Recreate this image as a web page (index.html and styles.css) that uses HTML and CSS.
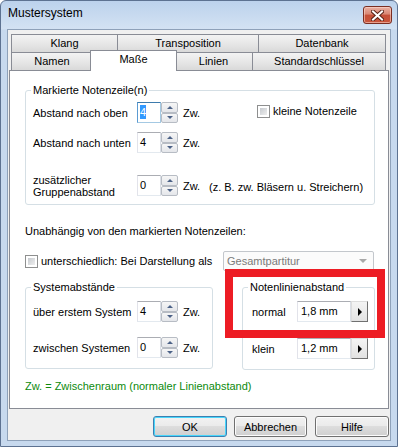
FILE: index.html
```html
<!DOCTYPE html>
<html lang="de">
<head>
  <meta charset="UTF-8">
  <title>Mustersystem</title>
  <link rel="stylesheet" href="styles.css">
</head>
<body>

  <div class="window">
    <div class="titlebar">
      <span class="title">Mustersystem</span>
      <div class="close">
        <svg width="13" height="11" viewBox="0 0 13 11">
          <path d="M2 1.5 L11 9.5 M11 1.5 L2 9.5" stroke="#5b2418" stroke-width="4" stroke-linecap="square"/>
          <path d="M2 1.5 L11 9.5 M11 1.5 L2 9.5" stroke="#fff" stroke-width="2" stroke-linecap="square"/>
        </svg>
      </div>
    </div>

    <div class="client">
      <div class="tabs">
        <div class="tabrow">
          <div class="tab t-klang">Klang</div>
          <div class="tab t-transp">Transposition</div>
          <div class="tab t-daten">Datenbank</div>
        </div>
        <div class="tabrow">
          <div class="tab t-namen">Namen</div>
          <div class="tab tab-active">Maße</div>
          <div class="tab t-linien">Linien</div>
          <div class="tab t-std">Standardschlüssel</div>
        </div>
      </div>

      <div class="panel">
        <div class="group group-marked">
          <span class="legend">Markierte Notenzeile(n)</span>
          <div class="row">
            <span class="lbl">Abstand nach oben</span>
            <div class="spin focus">
              <div class="edit"><span class="sel">4</span></div>
              <div class="updown"><span class="ud up"></span><span class="ud down"></span></div>
            </div>
            <span class="zw">Zw.</span>
            <span class="cb cb-small"></span>
            <span class="cb-text">kleine Notenzeile</span>
          </div>
          <div class="row row-2">
            <span class="lbl">Abstand nach unten</span>
            <div class="spin">
              <div class="edit">4</div>
              <div class="updown"><span class="ud up"></span><span class="ud down"></span></div>
            </div>
            <span class="zw">Zw.</span>
          </div>
          <div class="row row-3">
            <span class="lbl lbl-two">zusätzlicher<br>Gruppenabstand</span>
            <div class="spin">
              <div class="edit">0</div>
              <div class="updown"><span class="ud up"></span><span class="ud down"></span></div>
            </div>
            <span class="zw">Zw.</span>
            <span class="hint">(z. B. zw. Bläsern u. Streichern)</span>
          </div>
        </div>

        <div class="line-text">Unabhängig von den markierten Notenzeilen:</div>

        <div class="row-combo">
          <span class="cb"></span>
          <span class="cb-text">unterschiedlich: Bei Darstellung als</span>
          <div class="combo">
            <span>Gesamtpartitur</span>
            <span class="combo-arrow"></span>
          </div>
        </div>

        <div class="groups">
          <div class="group group-system">
            <span class="legend">Systemabstände</span>
            <div class="row">
              <span class="lbl">über erstem System</span>
              <div class="spin">
                <div class="edit">4</div>
                <div class="updown"><span class="ud up"></span><span class="ud down"></span></div>
              </div>
              <span class="zw">Zw.</span>
            </div>
            <div class="row row-sys2">
              <span class="lbl">zwischen Systemen</span>
              <div class="spin">
                <div class="edit">0</div>
                <div class="updown"><span class="ud up"></span><span class="ud down"></span></div>
              </div>
              <span class="zw">Zw.</span>
            </div>
          </div>

          <div class="group group-lines">
            <span class="legend">Notenlinienabstand</span>
            <div class="row">
              <span class="lbl-mm">normal</span>
              <div class="edit edit-mm">1,8 mm</div>
              <span class="pick"></span>
            </div>
            <div class="row row-klein">
              <span class="lbl-mm">klein</span>
              <div class="edit edit-mm">1,2 mm</div>
              <span class="pick"></span>
            </div>
          </div>
        </div>

        <div class="legend-note">Zw. = Zwischenraum (normaler Linienabstand)</div>
      </div>

      <div class="buttons">
        <button class="btn default">OK</button>
        <button class="btn btn-cancel">Abbrechen</button>
        <button class="btn">Hilfe</button>
      </div>
    </div>

    <div class="marker"></div>
  </div>

</body>
</html>
```

FILE: styles.css
```css
body {
  margin: 0;
  font-family: 'Liberation Sans', Arial, sans-serif;
  font-size: 11px;
  color: #000;
  background: #fff;
}

.window {
  position: relative;
  width: 398px;
  height: 447px;
  box-sizing: border-box;
  border: 1px solid #5d7291;
  border-radius: 6px 6px 0 0;
  background: linear-gradient(#bcd2ec, #d3e2f3 28px, #c7d9ee 29px, #c7d9ee);
}

.titlebar {
  height: 28px;
  display: flex;
  justify-content: space-between;
  align-items: flex-start;
  padding: 0 5px 0 7px;
}

.title {
  font-size: 12px;
  line-height: 14px;
  margin-top: 5px;
}

.close {
  width: 29px;
  height: 18px;
  margin-top: 5px;
  box-sizing: border-box;
  border: 1px solid #7a2e22;
  border-radius: 3px;
  background: linear-gradient(#eab0a3, #d98773 45%, #c65038 50%, #c8553c);
  box-shadow: inset 0 0 0 1px rgba(255, 220, 210, 0.55);
  display: flex;
  justify-content: center;
  align-items: center;
}

.client {
  margin: 0 6px;
  height: 412px;
  box-sizing: border-box;
  border: 1px solid #8ea1b9;
  background: #f0f0f0;
}

/* tabs */

.tabs {
  padding: 4px 0 0 3px;
}

.tabrow {
  display: flex;
  height: 18px;
}

.tab {
  height: 18px;
  box-sizing: border-box;
  border: 1px solid #898c95;
  border-bottom: none;
  margin-left: -1px;
  background: linear-gradient(#f3f3f3, #e6e6e6 55%, #d9d9d9);
  text-align: center;
  line-height: 17px;
}

.tab:first-child { margin-left: 0; }

.t-klang { width: 107px; }
.t-transp { width: 142px; }
.t-daten { width: 128px; }
.t-namen { width: 82px; }
.t-linien { width: 79px; margin-left: -3px; }
.t-std { width: 134px; }

.tab-active {
  position: relative;
  z-index: 1;
  width: 87px;
  height: 21px;
  margin: -2px 0 0 -3px;
  background: #fff;
  line-height: 16px;
}

.panel {
  margin-left: 1px;
  width: 380px;
  height: 339px;
  box-sizing: border-box;
  border: 1px solid #898c95;
  background: #fff;
  padding: 19px 0 0 15px;
}

/* group boxes */

.group {
  position: relative;
  box-sizing: border-box;
  border: 1px solid #d5dfe5;
  border-radius: 3px;
}

.legend {
  position: absolute;
  top: -7px;
  left: 5px;
  padding: 0 2px;
  background: #fff;
  line-height: 13px;
}

.group-marked {
  width: 350px;
  height: 115px;
  padding: 11px 0 0 7px;
}

.row {
  display: flex;
  align-items: center;
  height: 21px;
}

.row-2 { margin-top: 9px; }
.row-3 { margin-top: 22px; }

.lbl {
  width: 104px;
  white-space: nowrap;
}

.lbl-two {
  line-height: 12px;
}

.spin {
  display: flex;
  height: 21px;
}

.edit {
  width: 24px;
  height: 21px;
  box-sizing: border-box;
  border: 1px solid;
  border-color: #abadb3 #dbdfe6 #e3e9ef #e2e3ea;
  background: #fff;
  padding: 3px 0 0 2px;
  line-height: 13px;
}

.spin.focus .edit {
  border-color: #3d7bad #a4c9e3 #a4c9e3 #5b9bd2;
}

.sel {
  background: #3399ff;
  color: #fff;
  padding: 1px 0;
}

.updown {
  width: 17px;
  display: flex;
  flex-direction: column;
}

.ud {
  flex: 1;
  box-sizing: border-box;
  border: 1px solid #b7bcc4;
  border-radius: 2px;
  background: linear-gradient(#f6f6f6, #e4e6ea);
  display: flex;
  justify-content: center;
  align-items: center;
}

.ud::after {
  content: '';
  border-left: 3px solid transparent;
  border-right: 3px solid transparent;
}

.up::after { border-bottom: 3px solid #4c6287; }
.down::after { border-top: 3px solid #4c6287; }

.zw {
  width: 20px;
  margin-left: 5px;
  white-space: nowrap;
}

.cb {
  width: 13px;
  height: 13px;
  box-sizing: border-box;
  border: 1px solid #8e8f8f;
  background: #fff;
  padding: 2px;
  flex: none;
}

.cb::after {
  content: '';
  display: block;
  width: 100%;
  height: 100%;
  background: linear-gradient(135deg, #c6cacf, #eeeeee);
}

.cb-small {
  margin-left: 54px;
  margin-top: -3px;
}

.cb-text {
  margin-left: 3px;
  white-space: nowrap;
}

.row .cb-text { margin-top: -3px; }

.hint {
  margin-left: 6px;
  margin-top: 3px;
  white-space: nowrap;
}

.line-text {
  margin-top: 20px;
  line-height: 13px;
}

.row-combo {
  display: flex;
  align-items: center;
  height: 20px;
  margin-top: 13px;
}

.combo {
  margin: 0 14px 0 auto;
  width: 151px;
  height: 20px;
  box-sizing: border-box;
  border: 1px solid #c3c7cc;
  border-radius: 2px;
  background: #fbfbfb;
  color: #7a7a7a;
  padding: 0 6px 0 3px;
  display: flex;
  justify-content: space-between;
  align-items: center;
}

.combo-arrow {
  border-left: 4px solid transparent;
  border-right: 4px solid transparent;
  border-top: 4px solid #a8a8a8;
}

.groups {
  display: flex;
  align-items: flex-start;
  margin-top: 16px;
}

.group-system {
  width: 188px;
  height: 82px;
  padding: 13px 0 0 7px;
}

.row-sys2 { margin-top: 15px; }

.group-lines {
  width: 133px;
  height: 83px;
  margin-left: 29px;
  padding: 13px 0 0 9px;
}

.row-klein { margin-top: 16px; }

.lbl-mm {
  width: 45px;
}

.edit-mm {
  width: 54px;
  padding-left: 3px;
}

.pick {
  width: 17px;
  height: 21px;
  box-sizing: border-box;
  border: 1px solid #8f8f8f;
  border-color: #dcdcdc #707070 #707070 #dcdcdc;
  background: linear-gradient(#f4f4f4, #e2e2e2);
  display: flex;
  justify-content: center;
  align-items: center;
}

.pick::after {
  content: '';
  border-top: 4px solid transparent;
  border-bottom: 4px solid transparent;
  border-left: 4px solid #000;
}

.legend-note {
  margin-top: 10px;
  line-height: 13px;
  color: #0d8a0d;
}

/* dialog buttons */

.buttons {
  display: flex;
  justify-content: flex-end;
  gap: 7px;
  margin-top: 7px;
  padding-right: 1px;
}

.btn {
  width: 74px;
  height: 21px;
  padding: 0;
  font-family: inherit;
  font-size: 11px;
  color: #000;
  border: 1px solid #707070;
  border-radius: 3px;
  background: linear-gradient(#f2f2f2, #ebebeb 45%, #dddddd 50%, #cfcfcf);
  box-shadow: inset 0 0 0 1px #fcfcfc;
}

.btn-cancel {
  width: 73px;
  margin-right: 1px;
}

.btn.default {
  border-color: #3c7fb1;
  box-shadow: inset 0 0 0 1px #48d6fb;
}

.marker {
  position: absolute;
  left: 224px;
  top: 268px;
  width: 160px;
  height: 69px;
  box-sizing: border-box;
  border: 8px solid #ed1c24;
}
```
